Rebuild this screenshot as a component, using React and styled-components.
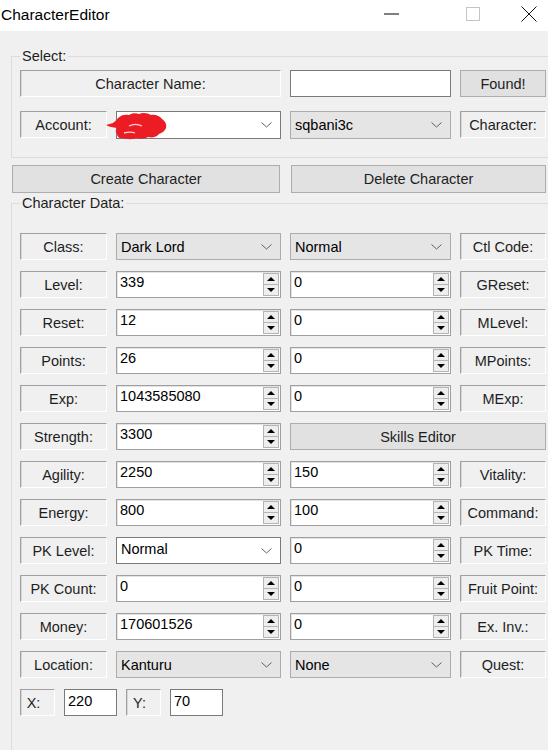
import * as React from "react";
import styled, { createGlobalStyle } from "styled-components";

const GlobalStyle = createGlobalStyle`
  html, body {
    margin: 0;
    padding: 0;
    background: #f0f0f0;
  }
`;

const Screen = styled.div`
  width: 548px;
  height: 750px;
  overflow: hidden;
  background: #f0f0f0;
  font-family: "Liberation Sans", Arial, sans-serif;
  color: #1e1e1e;
`;

const TitleBar = styled.div`
  height: 31px;
  background: #fff;
  display: flex;
  align-items: center;
`;

const Title = styled.div`
  padding-left: 1px;
  font-size: 15.5px;
  color: #000;
  flex: 1;
  margin-top: -2px;
`;

const Caption = styled.div`
  width: ${p => p.$w}px;
  height: 31px;
  display: flex;
  align-items: center;
  justify-content: center;
  margin-top: -3px;
`;

const Body = styled.div`
  padding: 17px 0 0 11px;
  display: flex;
  flex-direction: column;
`;

const Group = styled.fieldset`
  margin: ${p => p.$mt || 0}px 0 0 0;
  width: 560px;
  box-sizing: border-box;
  border: 1px solid #dcdcdc;
  padding: ${p => p.$pt}px 0 ${p => p.$pb}px 8px;
`;

const Legend = styled.legend`
  padding: 0 2px;
  font-size: 14.5px;
  line-height: 17px;
  color: #1e1e1e;
`;

const Grid = styled.div`
  display: grid;
  grid-template-columns: 87px 165px 161px 86px;
  column-gap: 9px;
  row-gap: ${p => p.$rowGap}px;
  grid-auto-rows: 27px;
`;

const Label = styled.div`
  grid-column: ${p => p.$span || "auto"};
  box-sizing: border-box;
  display: flex;
  align-items: center;
  justify-content: center;
  padding-right: ${p => p.$padR || 0}px;
  border: 1px solid;
  border-color: #a0a0a0 #fff #fff #a0a0a0;
  box-shadow: inset 1px 0 0 #d6d6d6;
  font-size: 14.5px;
  white-space: nowrap;
  width: ${p => (p.$w ? `${p.$w}px` : "auto")};
  height: 27px;
`;

const TextBox = styled.div`
  box-sizing: border-box;
  background: #fff;
  border: 1px solid #7a7a7a;
  padding: 3px 3px 0;
  font-size: 14.5px;
  line-height: 17px;
  color: #000;
  grid-column: ${p => p.$span || "auto"};
  width: ${p => (p.$w ? `${p.$w}px` : "auto")};
  height: ${p => p.$h || 27}px;
`;

const Button = styled.div`
  grid-column: ${p => p.$span || "auto"};
  box-sizing: border-box;
  background: #e1e1e1;
  border: 1px solid #adadad;
  display: flex;
  align-items: center;
  justify-content: center;
  font-size: 14.5px;
  color: #1e1e1e;
  height: ${p => p.$h || 27}px;
`;

const Combo = styled.div`
  position: relative;
  box-sizing: border-box;
  display: flex;
  align-items: center;
  justify-content: space-between;
  padding: 0 8px 0 4px;
  background: ${p => (p.$white ? "#fff" : "#e5e5e5")};
  border: 1px solid ${p => (p.$white ? "#7a7a7a" : "#acacac")};
  font-size: 14.5px;
  color: #000;
  height: ${p => p.$h || 27}px;
  span {
    margin-top: ${p => (p.$white ? -3 : 0)}px;
  }
`;

const Spin = styled.div`
  box-sizing: border-box;
  display: flex;
  background: #fff;
  border: 1px solid #a0a0a0;
  box-shadow: inset 1px 1px 0 #e3e3e3;
  height: 27px;
`;

const SpinValue = styled.div`
  flex: 1;
  padding: 2px 3px 0;
  font-size: 14.5px;
  line-height: 17px;
  color: #000;
`;

const SpinButtons = styled.div`
  width: 16px;
  margin: 1px 1px 1px 0;
  display: flex;
  flex-direction: column;
  border: 1px solid #b4b4b4;
  box-sizing: border-box;
`;

const SpinHalf = styled.div`
  flex: 1;
  display: flex;
  align-items: center;
  justify-content: center;
  background: #eeeeee;
  border-top: ${p => (p.$down ? "1px solid #b4b4b4" : "none")};
  &::after {
    content: "";
    width: 0;
    height: 0;
    border-left: 4px solid transparent;
    border-right: 4px solid transparent;
    ${p =>
      p.$down
        ? "border-top: 4px solid #000;"
        : "border-bottom: 4px solid #000;"}
  }
`;

const ButtonRow = styled.div`
  margin-top: 7px;
  padding-left: 1px;
  display: grid;
  grid-template-columns: 268px 255px;
  column-gap: 11px;
`;

const CoordRow = styled.div`
  grid-column: 1 / -1;
  display: flex;
  gap: 9px;
`;

const Scribble = styled.svg`
  position: absolute;
  left: -12px;
  top: 0px;
`;

const Chevron = () => (
  <svg width="11" height="6" viewBox="0 0 11 6">
    <path d="M0.5 0.5 L5.5 5 L10.5 0.5" fill="none" stroke="#5f5f5f" strokeWidth="1" />
  </svg>
);

const SpinBox = ({ value }) => (
  <Spin>
    <SpinValue>{value}</SpinValue>
    <SpinButtons>
      <SpinHalf />
      <SpinHalf $down />
    </SpinButtons>
  </Spin>
);

const Field = ({ f }) => {
  if (f.type === "combo") {
    return (
      <Combo $white={f.white}>
        <span>{f.value}</span>
        <Chevron />
      </Combo>
    );
  }
  if (f.type === "button") {
    return <Button $span="span 2">{f.value}</Button>;
  }
  return <SpinBox value={f.value} />;
};

const combo = (value, white) => ({ type: "combo", value, white });
const spin = value => ({ type: "spin", value });

const rows = [
  { label: "Class:", a: combo("Dark Lord"), b: combo("Normal"), right: "Ctl Code:" },
  { label: "Level:", a: spin("339"), b: spin("0"), right: "GReset:" },
  { label: "Reset:", a: spin("12"), b: spin("0"), right: "MLevel:" },
  { label: "Points:", a: spin("26"), b: spin("0"), right: "MPoints:" },
  { label: "Exp:", a: spin("1043585080"), b: spin("0"), right: "MExp:" },
  { label: "Strength:", a: spin("3300"), b: { type: "button", value: "Skills Editor" } },
  { label: "Agility:", a: spin("2250"), b: spin("150"), right: "Vitality:" },
  { label: "Energy:", a: spin("800"), b: spin("100"), right: "Command:" },
  { label: "PK Level:", a: combo("Normal", true), b: spin("0"), right: "PK Time:" },
  { label: "PK Count:", a: spin("0"), b: spin("0"), right: "Fruit Point:" },
  { label: "Money:", a: spin("170601526"), b: spin("0"), right: "Ex. Inv.:" },
  { label: "Location:", a: combo("Kanturu"), b: combo("None"), right: "Quest:" },
];

export default function App() {
  return (
    <Screen>
      <GlobalStyle />
      <TitleBar>
        <Title>CharacterEditor</Title>
        <Caption $w={90}>
          <svg width="15" height="2" viewBox="0 0 15 2">
            <path d="M0 1 H15" stroke="#000" strokeWidth="1" />
          </svg>
        </Caption>
        <Caption $w={74}>
          <svg width="14" height="14" viewBox="0 0 14 14">
            <rect x="0.5" y="0.5" width="13" height="13" fill="none" stroke="#c4c4c4" />
          </svg>
        </Caption>
        <Caption $w={38}>
          <svg width="16" height="16" viewBox="0 0 16 16">
            <path d="M0.5 0.5 L15.5 15.5 M15.5 0.5 L0.5 15.5" stroke="#111" strokeWidth="1" />
          </svg>
        </Caption>
      </TitleBar>

      <Body>
        <Group $pt={5} $pb={19}>
          <Legend>Select:</Legend>
          <Grid $rowGap={14}>
            <Label $span="span 2">Character Name:</Label>
            <TextBox />
            <Button>Found!</Button>
            <Label>Account:</Label>
            <Combo $white $h={28}>
              <span></span>
              <Chevron />
              <Scribble width="64" height="29" viewBox="0 0 64 29">
                <path
                  d="M1 13 L8 11 C10 9 12 8 13 6 C16 3 20 2 24 3 C27 1 31 1 34 2 C38 0 43 1 46 3 C50 2 55 4 57 7 C60 9 62 12 61 16 C60 19 57 21 54 22 C52 25 47 26 43 25 C40 27 35 27 31 26 C27 28 21 27 18 26 C15 27 12 25 12 22 C10 20 11 17 12 16 C8 15 4 15 1 13 Z"
                  fill="#ec1c24"
                />
                <path
                  d="M24 14 C28 12 33 12 37 14 M19 21 C23 20 27 20 30 21"
                  fill="none"
                  stroke="#fbd3d4"
                  strokeWidth="1.3"
                />
              </Scribble>
            </Combo>
            <Combo $h={28}>
              <span>sqbani3c</span>
              <Chevron />
            </Combo>
            <Label>Character:</Label>
          </Grid>
        </Group>

        <ButtonRow>
          <Button $h={28}>Create Character</Button>
          <Button $h={28}>Delete Character</Button>
        </ButtonRow>

        <Group $mt={2} $pt={21} $pb={40}>
          <Legend>Character Data:</Legend>
          <Grid $rowGap={11}>
            {rows.map(row => (
              <React.Fragment key={row.label}>
                <Label>{row.label}</Label>
                <Field f={row.a} />
                <Field f={row.b} />
                {row.right && <Label>{row.right}</Label>}
              </React.Fragment>
            ))}
            <CoordRow>
              <Label $w={35} $padR={8}>X:</Label>
              <TextBox $w={53}>220</TextBox>
              <Label $w={35} $padR={8}>Y:</Label>
              <TextBox $w={53}>70</TextBox>
            </CoordRow>
          </Grid>
        </Group>
      </Body>
    </Screen>
  );
}
